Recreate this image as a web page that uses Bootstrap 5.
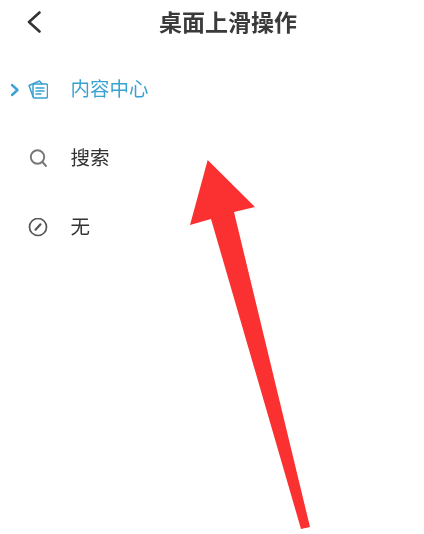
<!DOCTYPE html>
<html lang="zh">
<head>
<meta charset="utf-8">
<title>桌面上滑操作</title>
<link href="https://cdn.jsdelivr.net/npm/bootstrap@5.3.0/dist/css/bootstrap.min.css" rel="stylesheet">
<style>
html,body{margin:0;background:#fff;overflow:hidden}
.screen{width:424px;height:534px;position:relative;font-family:"Noto Sans CJK SC","Liberation Sans",sans-serif;color:#2b2b2b}
.topbar{height:43px;padding-left:26px;position:relative}
.back-btn{width:16px;height:22px;display:block}
.page-title{font-size:23px;font-weight:700;line-height:43px;margin:0;width:138px;margin-left:117px;white-space:nowrap;color:#3a3a3a}
.opts{padding-top:12px}
.opt{height:69px;padding-left:10px;font-size:19.500px;background:transparent;border:0;color:#333}
.opt-active{color:#3aa2d2}
.chev{width:10px;height:14px;flex:none}
.opt-icon{width:20px;height:20px;flex:none;margin-left:8px}
.opt-text{margin-left:22.500px;line-height:1;white-space:nowrap;padding-bottom:3px}
.arrow-over{position:absolute;left:0;top:0;width:424px;height:534px;pointer-events:none}
.soft{filter:blur(.6px)}
</style>
</head>
<body>
<div class="screen">
  <div class="topbar d-flex align-items-center soft">
    <svg class="back-btn" viewBox="0 0 16 22"><path d="M13.500 1.500 3 11l10.500 9.500" fill="none" stroke="#333" stroke-width="2.600" stroke-linecap="round" stroke-linejoin="round"/></svg>
    <h1 class="page-title">桌面上滑操作</h1>
  </div>
  <div class="opts d-flex flex-column soft">
    <div class="opt opt-active d-flex align-items-center">
      <svg class="chev" viewBox="0 0 10 14"><path d="M2 2l5.500 5L2 12" fill="none" stroke="#3aa2d2" stroke-width="2.400" stroke-linecap="round" stroke-linejoin="round"/></svg>
      <svg class="opt-icon" viewBox="0 0 20 20" fill="none" stroke="#3aa2d2" stroke-width="1.500" stroke-linejoin="round" stroke-linecap="round"><rect x="5" y="4" width="14.500" height="14" rx="1.500"/><path d="M5 16.500 1 5.500 11.500 1l2.500 3"/><path d="M8 8h8M8 11h8M8 14h5"/></svg>
      <span class="opt-text">内容中心</span>
    </div>
    <div class="opt d-flex align-items-center">
      <span class="chev"></span>
      <svg class="opt-icon" viewBox="0 0 20 20" fill="none" stroke="#777" stroke-width="1.900" stroke-linecap="round"><circle cx="9.500" cy="8" r="6.700"/><path d="M14.500 13l3.500 4"/></svg>
      <span class="opt-text">搜索</span>
    </div>
    <div class="opt d-flex align-items-center">
      <span class="chev"></span>
      <svg class="opt-icon" viewBox="0 0 20 20" fill="none" stroke="#555" stroke-width="1.700" stroke-linecap="round"><circle cx="10" cy="9" r="8.500"/><path d="M7.500 11.700 12.500 6.300" stroke-width="2.200"/></svg>
      <span class="opt-text">无</span>
    </div>
  </div>
  <svg class="arrow-over" viewBox="0 0 424 534"><polygon points="207.700,160 255,207 234,212 310,527 301,529 211,219 190,225" fill="#fb3030"/></svg>
</div>
<script src="https://cdn.jsdelivr.net/npm/bootstrap@5.3.0/dist/js/bootstrap.bundle.min.js"></script>
</body>
</html>
